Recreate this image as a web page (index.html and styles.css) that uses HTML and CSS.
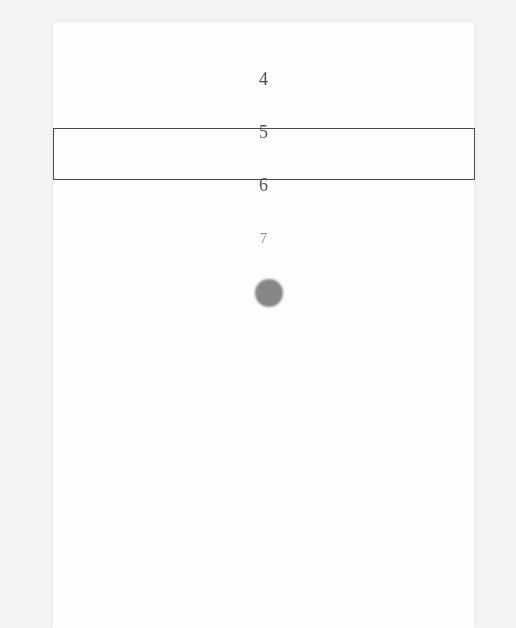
FILE: index.html
```html
<!DOCTYPE html>
<html>
<head>
<meta charset="utf-8">
<link rel="stylesheet" href="styles.css">
</head>
<body>
<div class="card">
  <div class="picker">
    <div class="row row-a">4</div>
    <div class="row row-b">5</div>
    <div class="row row-b">6</div>
    <div class="row row-c">7</div>
  </div>
  <div class="spinner"></div>
  <div class="select-box"></div>
</div>
</body>
</html>
```
FILE: styles.css
```css
html, body {
  margin: 0;
  padding: 0;
  height: 100%;
  background: #f4f4f5;
  overflow: hidden;
}
body {
  padding: 22px 42px 0 53px;
  box-sizing: border-box;
}
.card {
  position: relative;
  background: #fefdfe;
  height: 100%;
  border-radius: 4px 4px 0 0;
  box-shadow: 0 0 4px rgba(0,0,0,0.08);
  display: flex;
  flex-direction: column;
  align-items: center;
  padding-top: 31px;
  box-sizing: border-box;
}
.picker {
  display: flex;
  flex-direction: column;
  width: 100%;
}
.row {
  height: 53px;
  display: flex;
  align-items: center;
  justify-content: center;
  font-family: "Liberation Serif", serif;
  font-size: 18px;
  color: #555;
}
.row-a { color: #4a4a4a; filter: blur(0.5px); }
.row-b { color: #555; filter: blur(0.5px); }
.row-c { font-size: 14px; color: #888; filter: blur(0.6px); }
.spinner {
  margin-top: 14px;
  margin-left: 10px;
  width: 28px;
  height: 28px;
  border-radius: 50%;
  background: #868686;
  filter: blur(1.2px);
}
.select-box {
  position: absolute;
  left: 0;
  right: -1px;
  top: 106px;
  height: 52px;
  box-sizing: border-box;
  border: 1.5px solid #4a4a4a;
}
```
